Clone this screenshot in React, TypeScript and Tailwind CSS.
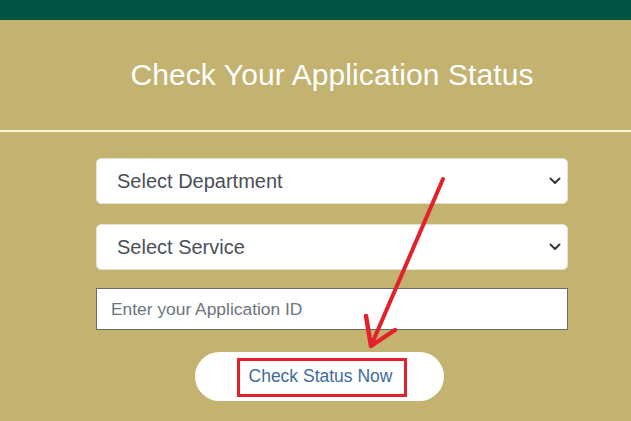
import React from "react";

const Chevron = () => (
  <svg width="12" height="8" viewBox="0 0 12 8" className="shrink-0">
    <path d="M1.5 1.5 L6 6 L10.5 1.5" fill="none" stroke="#343a40" strokeWidth="2" strokeLinecap="round" strokeLinejoin="round" />
  </svg>
);

export default function App() {
  return (
    <div className="relative w-[631px] h-[421px] overflow-hidden bg-[#c3b270]" style={{ fontFamily: '"Liberation Sans", Arial, sans-serif' }}>
      <div className="h-[20px] bg-[#015343]" />
      <div className="ml-[96px] w-[472px] h-[110px] flex items-center justify-center pb-[1px]">
        <h1 className="text-white text-[30px] leading-none font-normal tracking-[0.1px]">Check Your Application Status</h1>
      </div>
      <div className="h-[2px] bg-[#fdf7d0]" />
      <div className="ml-[96px] w-[472px] pt-[26px] flex flex-col">
        <div className="h-[46px] bg-white rounded-[5px] flex items-center justify-between pl-[20px] pr-[6px] border border-[#e5e1d0]">
          <span className="text-[20px] text-[#495057]">Select Department</span>
          <Chevron />
        </div>
        <div className="mt-[20px] h-[46px] bg-white rounded-[5px] flex items-center justify-between pl-[20px] pr-[6px] border border-[#e5e1d0]">
          <span className="text-[20px] text-[#495057]">Select Service</span>
          <Chevron />
        </div>
        <div className="mt-[18px] h-[42px] bg-white border border-[#6b6b6b] flex items-center pl-[14px]">
          <span className="text-[17.4px] text-[#6c757d]">Enter your Application ID</span>
        </div>
        <div className="mt-[22px] ml-[99px] w-[249px] h-[49px] bg-white rounded-full relative flex items-center justify-center">
          <span className="text-[17.5px] text-[#3e6c9c] pl-[2px]">Check Status Now</span>
          <div className="absolute left-[42px] top-[6px] w-[170px] h-[39px] border-[3px] border-[#e3212d]" />
        </div>
      </div>
      <svg className="absolute left-0 top-0 pointer-events-none" width="631" height="421" viewBox="0 0 631 421">
        <path d="M443 179 L371 346" stroke="#e3212d" strokeWidth="4" strokeLinecap="round" fill="none" />
        <path d="M366 316 L371 346 L395 330" stroke="#e3212d" strokeWidth="4.5" strokeLinecap="round" strokeLinejoin="round" fill="none" />
      </svg>
    </div>
  );
}
